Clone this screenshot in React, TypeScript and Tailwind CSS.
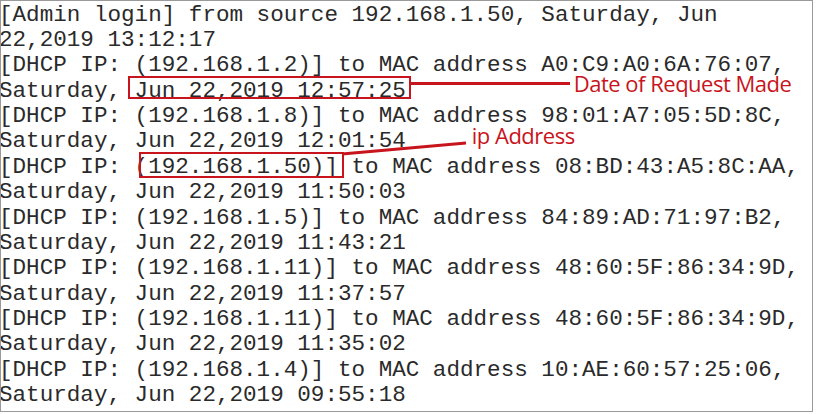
import React from "react";

const RED = "text-[#c8141c]";

export default function App() {
  const lines: string[] = [
    "[Admin login] from source 192.168.1.50, Saturday, Jun",
    "22,2019 13:12:17",
    "[DHCP IP: (192.168.1.2)] to MAC address A0:C9:A0:6A:76:07,",
  ];
  const rest: string[] = [
    "Saturday, Jun 22,2019 11:50:03",
    "[DHCP IP: (192.168.1.5)] to MAC address 84:89:AD:71:97:B2,",
    "Saturday, Jun 22,2019 11:43:21",
    "[DHCP IP: (192.168.1.11)] to MAC address 48:60:5F:86:34:9D,",
    "Saturday, Jun 22,2019 11:37:57",
    "[DHCP IP: (192.168.1.11)] to MAC address 48:60:5F:86:34:9D,",
    "Saturday, Jun 22,2019 11:35:02",
    "[DHCP IP: (192.168.1.4)] to MAC address 10:AE:60:57:25:06,",
    "Saturday, Jun 22,2019 09:55:18",
  ];
  return (
    <div className="w-[816px] h-[414px] bg-white">
      <div className="w-[813px] h-[412px] border border-[#9a9a9a] bg-white overflow-hidden">
        <div className="-ml-[2px] pt-[1.7px] font-['Liberation_Mono','Courier_New',monospace] text-[22.6px] leading-[25.36px] text-[#2a2a2a] whitespace-pre">
          {lines.map((l, i) => (
            <div key={i}>{l}</div>
          ))}
          <div>
            {"Saturday, "}
            <span className="relative">
              Jun 22,2019 12:57:25
              <span className="absolute -left-[7px] -right-[5px] -top-[1.5px] bottom-[4.5px] border-2 border-[#c8141c]" />
            </span>
            <span className="relative -top-[12px] ml-[4px] inline-block w-[160px] h-[3px] bg-[#c8141c]" />
            <span
              className={`relative -top-[5px] ml-[4px] font-['Open_Sans',sans-serif] text-[22px] tracking-[-0.5px] leading-[18px] ${RED}`}
            >
              Date of Request Made
            </span>
          </div>
          <div>[DHCP IP: (192.168.1.8)] to MAC address 98:01:A7:05:5D:8C,</div>
          <div>
            {"Saturday, Jun 22,2019 12:01:54"}
            <span
              className={`relative -top-[3px] ml-[66px] font-['Open_Sans',sans-serif] text-[22px] tracking-[-0.5px] leading-[18px] ${RED}`}
            >
              ip Address
            </span>
          </div>
          <div>
            {"[DHCP IP: "}
            <span className="relative">
              (192.168.1.50)]
              <span className="absolute left-[4px] -right-[6px] -top-[2px] bottom-[1.5px] border-2 border-[#c8141c]" />
              <svg
                className="absolute -right-[130px] -top-[14px] overflow-visible"
                width="126"
                height="16"
                viewBox="0 0 126 16"
              >
                <line x1="0" y1="14" x2="124" y2="3" stroke="#c8141c" strokeWidth="3" />
              </svg>
            </span>
            {" to MAC address 08:BD:43:A5:8C:AA,"}
          </div>
          {rest.map((l, i) => (
            <div key={"r" + i}>{l}</div>
          ))}
        </div>
      </div>
    </div>
  );
}
